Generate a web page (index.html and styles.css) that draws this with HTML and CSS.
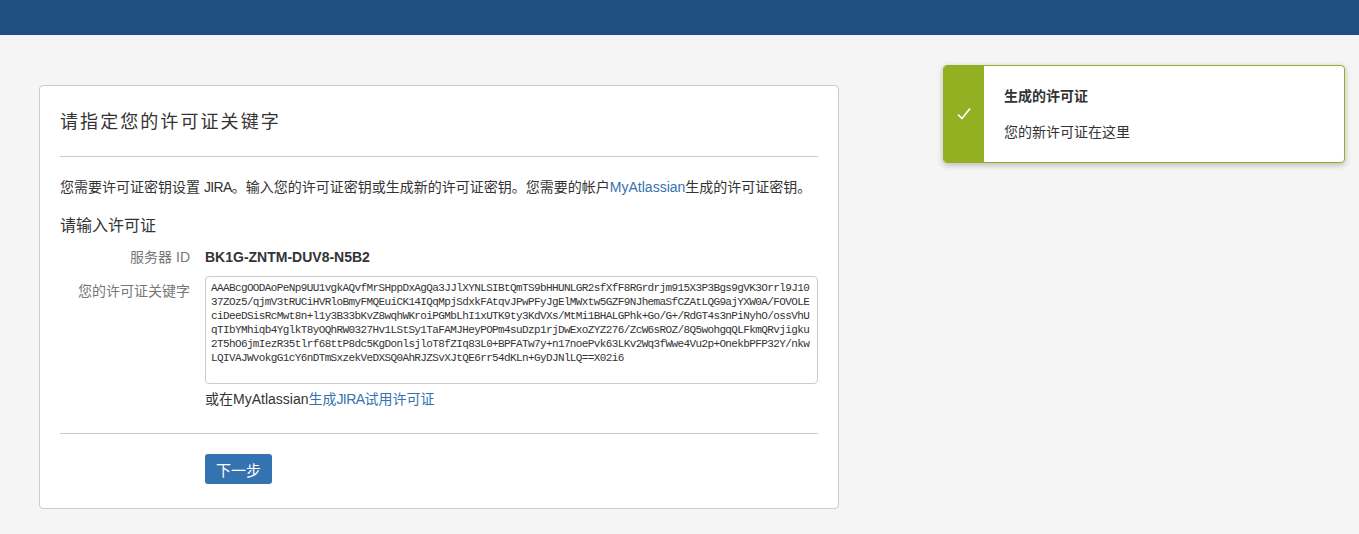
FILE: index.html
```html
<!DOCTYPE html>
<html lang="zh-CN">
<head>
    <meta charset="UTF-8">
    <title>JIRA 设置</title>
    <link rel="stylesheet" href="styles.css">
</head>
<body>
    <header class="top-bar"></header>

    <main class="page">
        <section class="card">
            <h1 class="card-title">请指定您的许可证关键字</h1>
            <hr class="rule">
            <p class="intro">您需要许可证密钥设置 <span class="jira">JIRA</span>。输入您的许可证密钥或生成新的许可证密钥。您需要的帐户<a href="#" class="link">MyAtlassian</a>生成的许可证密钥。</p>
            <h2 class="sub-title">请输入许可证</h2>

            <div class="field field-id">
                <span class="field-label">服务器 ID</span>
                <strong class="server-id">BK1G-ZNTM-DUV8-N5B2</strong>
            </div>

            <div class="field field-key">
                <label for="license" class="field-label">您的许可证关键字</label>
                <div class="field-body">
                    <textarea id="license" class="license-box" spellcheck="false">AAABcgOODAoPeNp9UU1vgkAQvfMrSHppDxAgQa3JJlXYNLSIBtQmTS9bHHUNLGR2sfXfF8RGrdrjm915X3P3Bgs9gVK3Orrl9J10
37ZOz5/qjmV3tRUCiHVRloBmyFMQEuiCK14IQqMpjSdxkFAtqvJPwPFyJgElMWxtw5GZF9NJhemaSfCZAtLQG9ajYXW0A/FOVOLE
ciDeeDSisRcMwt8n+l1y3B33bKvZ8wqhWKroiPGMbLhI1xUTK9ty3KdVXs/MtMi1BHALGPhk+Go/G+/RdGT4s3nPiNyhO/ossVhU
qTIbYMhiqb4YglkT8yOQhRW0327Hv1LStSy1TaFAMJHeyPOPm4suDzp1rjDwExoZYZ276/ZcW6sROZ/8Q5wohgqQLFkmQRvjigku
2T5hO6jmIezR35tlrf68ttP8dc5KgDonlsjloT8fZIq83L0+BPFATw7y+n17noePvk63LKv2Wq3fWwe4Vu2p+OnekbPFP32Y/nkw
LQIVAJWvokgG1cY6nDTmSxzekVeDXSQ0AhRJZSvXJtQE6rr54dKLn+GyDJNlLQ==X02i6</textarea>
                    <p class="field-hint">或在MyAtlassian<a href="#" class="link">生成<span class="jira">JIRA</span>试用许可证</a></p>
                </div>
            </div>

            <hr class="rule rule-bottom">

            <div class="actions">
                <button class="btn-primary">下一步</button>
            </div>
        </section>
    </main>

    <!-- success toast -->
    <aside class="toast">
        <div class="toast-icon">
            <svg width="16" height="16" viewBox="0 0 16 16" fill="none" stroke="#fff" stroke-width="1.7">
                <path d="M2 8.5 L6 12.5 L14 2.5"/>
            </svg>
        </div>
        <div class="toast-body">
            <h3 class="toast-title">生成的许可证</h3>
            <p class="toast-text">您的新许可证在这里</p>
        </div>
    </aside>
</body>
</html>
```

FILE: styles.css
```css
body {
    margin: 0;
    background-color: #f5f5f5;
    color: #333;
    font-family: "Liberation Sans", "Noto Sans CJK SC", sans-serif;
    font-size: 14px;
    line-height: 20px;
}

.top-bar {
    height: 35px;
    background-color: #205081;
}

.page {
    padding: 50px 0 0 39px;
}

.card {
    box-sizing: border-box;
    width: 800px;
    height: 424px;
    padding: 20px;
    background-color: #fff;
    border: 1px solid #ccc;
    border-radius: 4px;
}

.card-title {
    margin: 1px 0 0;
    font-size: 18px;
    font-weight: normal;
    line-height: 30px;
    letter-spacing: 2.07px;
}

.rule {
    margin: 19px 0 0;
    border: none;
    border-top: 1px solid #ccc;
}

.intro {
    margin: 20px 0 0;
}

.jira {
    letter-spacing: -0.6px;
}

.sub-title {
    margin: 19px 0 0;
    font-size: 16px;
    font-weight: normal;
    line-height: 20px;
}

.field {
    display: grid;
    grid-template-columns: 130px 1fr;
    column-gap: 15px;
}

.field-id {
    margin-top: 11px;
}

.field-key {
    margin-top: 9px;
}

.field-label {
    color: #777;
    text-align: right;
}

.field-key .field-label {
    padding-top: 5px;
}

.server-id {
    font-weight: bold;
}

.license-box {
    display: block;
    box-sizing: border-box;
    width: 100%;
    height: 108px;
    margin: 0;
    padding: 4px 5px;
    border: 1px solid #ccc;
    border-radius: 4px;
    color: #333;
    font-family: "Liberation Mono", monospace;
    font-size: 11px;
    letter-spacing: -0.62px;
    line-height: 14px;
    white-space: pre;
    overflow: hidden;
    resize: none;
}

.field-hint {
    margin: 5px 0 0;
}

.link {
    color: #3572b0;
    text-decoration: none;
}

.rule-bottom {
    margin-top: 24px;
}

.actions {
    margin-top: 20px;
    padding-left: 145px;
}

.btn-primary {
    width: 67px;
    height: 30px;
    padding: 0;
    color: #fff;
    background-color: #3572b0;
    border: none;
    border-radius: 3px;
    font-family: inherit;
    font-size: 15px;
    cursor: pointer;
}

/* floats over the page, top right */
.toast {
    position: absolute;
    top: 65px;
    left: 943px;
    box-sizing: border-box;
    display: flex;
    width: 402px;
    height: 98px;
    background-color: #fff;
    border: 1px solid #92b022;
    border-radius: 4px;
    box-shadow: 0 2px 6px rgba(0, 0, 0, 0.25);
    overflow: hidden;
}

.toast-icon {
    display: flex;
    align-items: center;
    justify-content: center;
    width: 40px;
    background-color: #92b022;
}

.toast-body {
    padding: 20px;
}

.toast-title {
    margin: 0;
    font-size: 14px;
    font-weight: bold;
    line-height: 20px;
}

.toast-text {
    margin: 16px 0 0;
}
```
